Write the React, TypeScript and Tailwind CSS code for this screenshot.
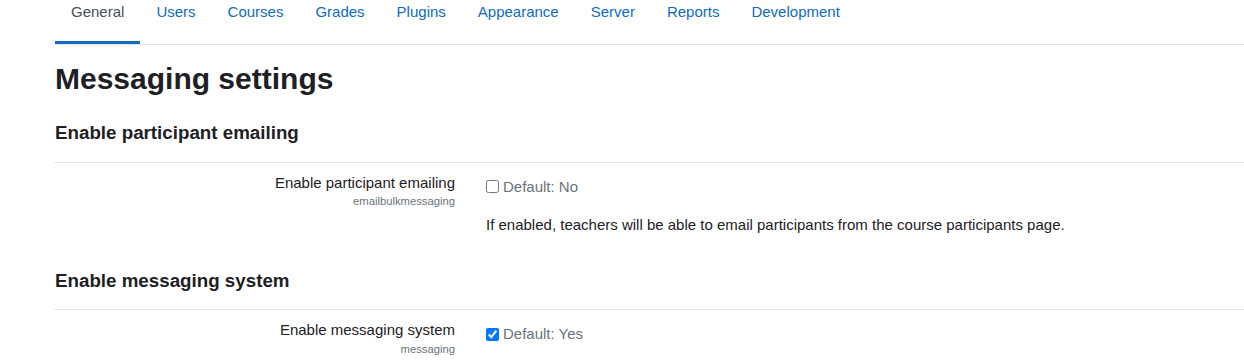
import React from "react";

const tabs = ["General", "Users", "Courses", "Grades", "Plugins", "Appearance", "Server", "Reports", "Development"];

type Setting = {
  heading: string;
  label: string;
  shortname: string;
  checked: boolean;
  defaultText: string;
  description?: string;
};

const settings: Setting[] = [
  {
    heading: "Enable participant emailing",
    label: "Enable participant emailing",
    shortname: "emailbulkmessaging",
    checked: false,
    defaultText: "Default: No",
    description: "If enabled, teachers will be able to email participants from the course participants page.",
  },
  {
    heading: "Enable messaging system",
    label: "Enable messaging system",
    shortname: "messaging",
    checked: true,
    defaultText: "Default: Yes",
  },
];

const SettingBlock: React.FC<{ s: Setting; first: boolean }> = ({ s, first }) => (
  <div className={first ? "mt-[25px]" : "mt-[33px]"}>
    <h3 className="text-[18.75px] font-bold leading-[1.2] text-[#1d2125]">{s.heading}</h3>
    <div className="mt-[17px] border-t border-[#dee2e6] flex">
      <div className="w-[400px] shrink-0 pt-[9px] text-right">
        <div className="text-[15px] leading-[22.5px] text-[#1d2125]">{s.label}</div>
        <div className="text-[11.25px] leading-[15px] text-[#6a737b]">{s.shortname}</div>
      </div>
      <div className="pl-[31px] pt-[13px]">
        <label className="flex items-center text-[15px] leading-[22.5px] text-[#6a737b]">
          <input
            type="checkbox"
            defaultChecked={s.checked}
            className="m-0 mr-[4px] w-[13px] h-[13px]"
          />
          {s.defaultText}
        </label>
        {s.description && (
          <p className="mt-[16px] text-[15px] leading-[22.5px] text-[#1d2125]">{s.description}</p>
        )}
      </div>
    </div>
  </div>
);

export default function App() {
  return (
    <div className="min-h-[362px] bg-white pl-[55px] font-['Liberation_Sans',Arial,sans-serif] overflow-hidden">
      {/* Admin tree tabs */}
      <ul className="flex border-b border-[#dee2e6]">
        {tabs.map((t, i) => (
          <li key={t}>
            <a
              className={
                i === 0
                  ? "block px-4 pt-[1px] pb-[18px] text-[15px] leading-[22px] text-[#495057] border-b-[3px] border-[#0f6cbf]"
                  : "block px-4 pt-[1px] pb-[18px] text-[15px] leading-[22px] text-[#0f6cbf] border-b-[3px] border-transparent"
              }
            >
              {t}
            </a>
          </li>
        ))}
      </ul>

      <h2 className="mt-[16px] text-[30px] font-bold leading-[1.2] text-[#1d2125]">Messaging settings</h2>

      {settings.map((s, i) => (
        <SettingBlock key={s.shortname} s={s} first={i === 0} />
      ))}
    </div>
  );
}
